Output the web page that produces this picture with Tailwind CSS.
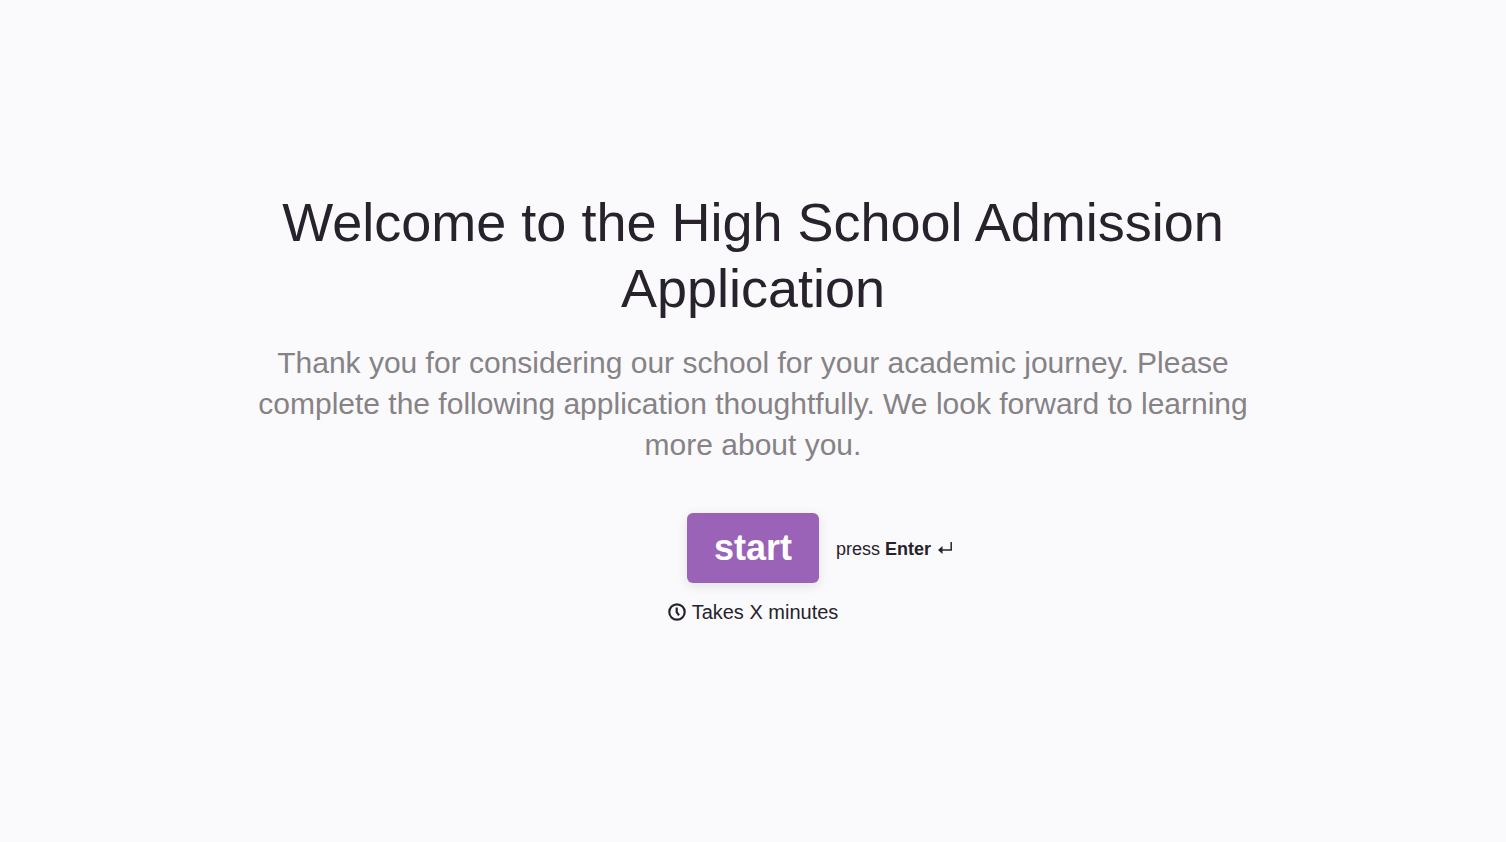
<!DOCTYPE html>
<html lang="en">
<head>
<meta charset="utf-8">
<meta name="viewport" content="width=device-width, initial-scale=1">
<title>High School Admission Application</title>
<script src="https://cdn.jsdelivr.net/npm/@tailwindcss/browser@4"></script>
</head>
<body class="bg-[#fafafc] font-['Liberation_Sans',Arial,sans-serif] text-[#27222b]">
<main class="flex min-h-screen flex-col items-center justify-center px-6 pb-[30px] text-center">
  <h1 class="max-w-[1000px] text-[54px] leading-[66px]">Welcome to the High School Admission Application</h1>
  <p class="mt-[21px] max-w-[1000px] text-[30px] leading-[41px] text-[#868286]">Thank you for considering our school for your academic journey. Please complete the following application thoughtfully. We look forward to learning more about you.</p>
  <div class="relative mt-12">
    <button type="button" class="block h-[70px] rounded-md bg-[#9b63b7] px-[27px] text-[36px] leading-none font-bold text-white shadow-[0_3px_12px_rgba(0,0,0,0.1)]">start</button>
    <div class="absolute top-0 left-full ml-[17px] flex h-full items-center gap-1.5 pt-1 text-[18px] whitespace-nowrap">
      <span>press <strong>Enter</strong></span>
      <svg class="mb-1 h-3 w-4" viewBox="0 0 16 12" fill="none" stroke="currentColor" stroke-width="1.500" aria-hidden="true"><path d="M14.200 0v8H4"/><path d="M1 8l4.500-4v8z" fill="currentColor" stroke="none"/></svg>
    </div>
  </div>
  <p class="mt-[17px] flex items-center gap-1.5 text-[20px] leading-6">
    <svg class="size-[18px]" viewBox="0 0 18 18" fill="none" stroke="currentColor" stroke-width="2.200" aria-hidden="true"><circle cx="9" cy="9" r="7.700"/><path d="M8.700 4.500v4.700l2.300 3.200"/></svg>
    Takes X minutes
  </p>
</main>
</body>
</html>
